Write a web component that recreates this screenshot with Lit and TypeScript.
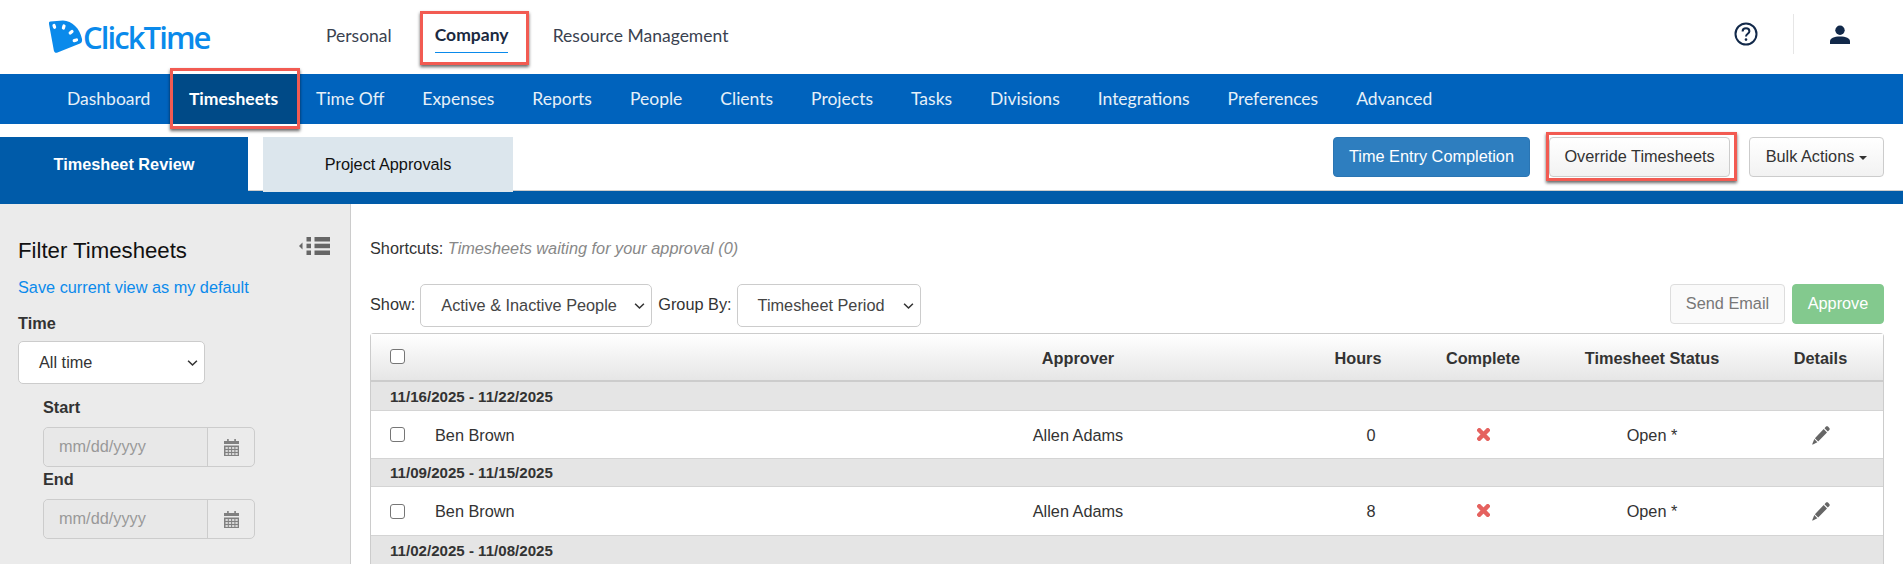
import { LitElement, html, css } from "lit";
import { customElement } from "lit/decorators.js";

const chevron = html`<svg class="chev" viewBox="0 0 12 8" width="11" height="8"><path d="M1.2 1.5 6 6.2l4.8-4.7" fill="none" stroke="#333" stroke-width="1.7"/></svg>`;
const calendar = html`<svg viewBox="0 0 15 17" width="15" height="17"><path fill="#8a8a8a" d="M3 0h1.800v2H3zM10.200 0H12v2h-1.800z"/><path fill="#808080" d="M0 2h15v3H0zM0 6.500h15V17H0z"/><g fill="#d8d8d8"><rect x="1.500" y="8" width="2.300" height="2"/><rect x="4.800" y="8" width="2.300" height="2"/><rect x="8.100" y="8" width="2.300" height="2"/><rect x="11.400" y="8" width="2.300" height="2"/><rect x="1.500" y="11" width="2.300" height="2"/><rect x="4.800" y="11" width="2.300" height="2"/><rect x="8.100" y="11" width="2.300" height="2"/><rect x="11.400" y="11" width="2.300" height="2"/><rect x="1.500" y="14" width="2.300" height="2"/><rect x="4.800" y="14" width="2.300" height="2"/><rect x="8.100" y="14" width="2.300" height="2"/><rect x="11.400" y="14" width="2.300" height="2"/></g></svg>`;
const pencil = html`<svg viewBox="0 0 18 19" width="18" height="19"><path fill="#666" d="M14 .6c.6-.6 1.400-.6 2 0l1.300 1.400c.6.6.6 1.400 0 2l-1.500 1.600-3.300-3.400zM11.700 3l3.300 3.400-8.800 9.200-3.300-3.400zM2.300 13l3.100 3.300L.9 18.600c-.4.2-.7-.1-.6-.5z"/></svg>`;
const cross = html`<svg class="x" viewBox="0 0 13 13" width="13" height="13"><path d="M2.300 2.300l8.400 8.400M10.700 2.300l-8.400 8.400" stroke="#e5625f" stroke-width="4.400" stroke-linecap="square"/></svg>`;

@customElement("app-root")
export class AppRoot extends LitElement {
  static styles = css`
    :host { display: block; width: 1903px; height: 564px; overflow: hidden; background: #fff; font-family: "Liberation Sans", Arial, sans-serif; font-size: 16.300px; color: #333; }
    * { box-sizing: border-box; }
    .top { height: 74px; display: flex; align-items: center; position: relative; }
    .logo { display: flex; align-items: center; margin-left: 49px; width: 277px; gap: 0; color: #0a8aeb; }
    .logo-text { font-family: "Open Sans", sans-serif; font-weight: 600; font-size: 31px; letter-spacing: -1.900px; line-height: 34px; }
    .top-nav { display: flex; font-family: Lato, sans-serif; font-size: 17.500px; color: #3a4250; align-items: center; }
    .top-nav .item { padding: 0 15px 6px; height: 54px; margin-top: 2px; display: flex; align-items: center; position: relative; }
    .top-nav .item:first-child { padding: 0 28px 6px 0; }
    .top-nav .item.on { width: 109px; padding: 0 15px 6px; font-weight: 700; color: #1b2a41; margin-right: 9px; }
    .top-nav .item.on span { border-bottom: 1px solid #0a8aeb; height: 33px; margin-top: 2px; line-height: 30px; display: block; }
    .top-right { margin-left: auto; display: flex; align-items: center; padding-right: 53px; }
    .help { display: block; margin-right: 35px; margin-top: -6px; }
    .vsep { width: 1px; height: 40px; background: #e6e6e6; margin-right: 36px; margin-top: -6px; }
    .user { display: block; margin-top: -4px; }
    .red::after { content: ""; position: absolute; border: 3px solid #f25b52; box-shadow: 0 2px 3px rgba(0,0,0,.6); pointer-events: none; }
    .top-nav .red::after { inset: 0; }
    .nav { height: 50px; background: #0063bd; display: flex; padding-left: 48px; font-family: Lato, sans-serif; font-size: 17.500px; color: #e6f0f8; }
    .nav .item { display: flex; align-items: center; padding: 0 19px 1px; position: relative; white-space: nowrap; }
    .nav .item.on { background: #004a87; font-weight: 700; color: #fff; padding: 0 19px 1px 16px; margin-left: 3.500px; }
    .nav .red::after { inset: -6px -3px -5px -3px; }
    .tabbar { height: 67px; display: flex; align-items: flex-start; padding: 13px 19px 0 0; border-bottom: 1px solid #ccc; }
    .tab { height: 54px; display: flex; align-items: center; justify-content: center; }
    .tab.a { width: 248px; background: #005ba9; color: #fff; font-weight: 700; }
    .tab.b { width: 250px; height: 55px; margin-left: 15px; background: #dce6ed; color: #111; position: relative; }
    .btns { margin-left: auto; display: flex; gap: 19px; }
    .btn { height: 40px; border-radius: 4px; display: flex; align-items: center; justify-content: center; border: 1px solid #ccc; background: linear-gradient(#fff, #f2f2f2); position: relative; white-space: nowrap; color: #333; padding-bottom: 1px; }
    .btn.primary { width: 197px; background: #2e7ebf; border-color: #2a75b3; color: #fff; }
    .btn.ov { width: 181px; }
    .btn.ov::after { inset: -6px -8px -5px -4px; }
    .btn.bulk { width: 135px; gap: 5px; }
    .caret { width: 0; height: 0; border-left: 4.500px solid transparent; border-right: 4.500px solid transparent; border-top: 4.500px solid #333; margin-top: 2px; }
    .bar { height: 13px; background: #005ba9; }
    .body { display: grid; grid-template-columns: 351px 1fr; height: 360px; }
    .side { background: #ebebeb; border-right: 1px solid #ccc; padding: 35px 20px 0 18px; }
    .side-head { display: flex; justify-content: space-between; align-items: flex-start; }
    .side-head svg { margin-top: -2px; }
    h2 { margin: 0; font-weight: 400; font-size: 22.200px; line-height: 24px; color: #111; }
    .link { color: #0a8aeb; line-height: 20px; margin-top: 14px; }
    .lbl { font-weight: 700; line-height: 20px; }
    .lbl.t { margin-top: 16px; }
    .sel { border: 1px solid #ccc; border-radius: 5px; background: #fff; display: flex; align-items: center; justify-content: space-between; height: 43px; }
    .sel.time { width: 187px; margin-top: 8px; padding: 0 6px 0 20px; }
    .sub { padding-left: 25px; }
    .sub .lbl.s { margin-top: 13px; }
    .sub .lbl.e { margin-top: 2px; }
    .date { width: 212px; height: 40px; border: 1px solid #ccc; border-radius: 5px; display: flex; margin-top: 10px; color: #999; }
    .date .v { width: 164px; padding: 0 0 1px 15px; display: flex; align-items: center; border-right: 1px solid #ccc; background: #e8e8e8; border-radius: 5px 0 0 5px; }
    .date .i { flex: 1; display: flex; align-items: center; justify-content: center; }
    .main { padding: 34px 19px 0 19px; min-width: 0; }
    .short { line-height: 20px; }
    .short i { color: #888; }
    .ctrl { display: flex; align-items: flex-start; margin-top: 26px; height: 49px; }
    .ctrl .l { line-height: 40px; margin-right: 5px; white-space: nowrap; }
    .ctrl .l + .sel { margin-right: 6px; padding: 0 6px 0 20px; color: #444; }
    .sel.show { width: 232px; }
    .sel.group { width: 184px; }
    .right { margin-left: auto; display: flex; gap: 7px; }
    .right .approve { width: 92px; background: #83c98e; color: #fff; border-color: #83c98e; }
    .right .send { width: 115px; color: #777; background: #fafafa; border-color: #ddd; }
    .table { border: 1px solid #ccc; border-bottom: 0; border-radius: 4px 4px 0 0; }
    .row { display: grid; grid-template-columns: 490px 434px 126px 124px 214px 123px; align-items: center; text-align: center; }
    .row > :first-child { text-align: left; display: flex; align-items: center; padding-left: 19px; }
    .head { height: 48px; background: linear-gradient(#fff, #e6e6e6); border-bottom: 2px solid #ccc; font-weight: 700; }
    .head > * { padding-top: 2px; }
    .head > :first-child { padding-bottom: 4px; }
    .grp { height: 29px; background: #e5e5e5; border-bottom: 1px solid #d4d4d4; padding-left: 19px; font-weight: 700; font-size: 15.100px; display: flex; align-items: center; color: #333; }
    .grp.b { height: 28px; }
    .item-row { height: 48px; border-bottom: 1px solid #d4d4d4; padding-top: 1px; }
    .item-row.b { height: 49px; }
    .cb { width: 15px; height: 15px; border: 1.500px solid #767676; border-radius: 3px; background: #fff; flex: none; }
    .item-row .cb { margin-top: -1px; }
    .name { margin-left: 30px; }
    .hrs { padding-left: 26px; }
    .ic { display: flex; justify-content: center; align-items: center; }
    .x { margin-top: -2px; }
  `;

  private rowItem(h: string, cls = "") {
    return html`<div class="row item-row ${cls}">
      <div><span class="cb"></span><span class="name">Ben Brown</span></div>
      <div>Allen Adams</div>
      <div class="hrs">${h}</div>
      <div class="ic">${cross}</div>
      <div>Open *</div>
      <div class="ic">${pencil}</div>
    </div>`;
  }

  render() {
    const navs = ["Dashboard", "Timesheets", "Time Off", "Expenses", "Reports", "People", "Clients", "Projects", "Tasks", "Divisions", "Integrations", "Preferences", "Advanced"];
    return html`
      <header class="top">
        <div class="logo">
          <svg viewBox="0 0 34 34" width="34" height="34">
            <path fill="#0a8aeb" d="M1.500 1.500 14 .5c9 .3 17 8 19 18.500.3 2-.3 3.800-2 4.500L8.500 32.500c-1.800.7-3.200-.1-3.600-1.800L0 4c-.3-1.500.2-2.300 1.500-2.500z"/>
            <g stroke="#fff" stroke-width="3.200" stroke-linecap="round"><path d="M5 5.500l.6 1.800M15 6l-.6 2M23 11.500l-1.800 1.500M27.500 20l-2.300.6"/></g>
          </svg>
          <span class="logo-text">ClickTime</span>
        </div>
        <nav class="top-nav">
          <div class="item">Personal</div>
          <div class="item on red"><span>Company</span></div>
          <div class="item">Resource Management</div>
        </nav>
        <div class="top-right">
          <svg class="help" viewBox="0 0 24 24" width="24" height="24"><circle cx="12" cy="12" r="10.500" fill="none" stroke="#12294a" stroke-width="2"/><path d="M8.600 9.400c0-2 1.500-3.200 3.400-3.200s3.400 1.200 3.400 3c0 2.600-3.400 2.600-3.400 5.300" fill="none" stroke="#12294a" stroke-width="2"/><circle cx="12" cy="17.600" r="1.300" fill="#12294a"/></svg>
          <div class="vsep"></div>
          <svg class="user" viewBox="0 0 20 20" width="20" height="20"><circle cx="10" cy="5.200" r="4.700" fill="#12294a"/><path fill="#12294a" d="M0 19v-2.500C0 13 4 11.500 10 11.500s10 1.500 10 5V19z"/></svg>
        </div>
      </header>
      <nav class="nav">
        ${navs.map((n) => html`<div class="item ${n === "Timesheets" ? "on red" : ""}">${n}</div>`)}
      </nav>
      <div class="tabbar">
        <div class="tab a">Timesheet Review</div>
        <div class="tab b">Project Approvals</div>
        <div class="btns">
          <div class="btn primary">Time Entry Completion</div>
          <div class="btn ov red">Override Timesheets</div>
          <div class="btn bulk">Bulk Actions <span class="caret"></span></div>
        </div>
      </div>
      <div class="bar"></div>
      <div class="body">
        <aside class="side">
          <div class="side-head">
            <h2>Filter Timesheets</h2>
            <svg viewBox="0 0 31 18" width="31" height="18" fill="#666"><path d="M0 9l3.500-3.500v7z"/><rect x="7.500" y="0" width="4.500" height="4.500"/><rect x="7.500" y="6.700" width="4.500" height="4.500"/><rect x="7.500" y="13.500" width="4.500" height="4.500"/><rect x="15.500" y="0" width="15.500" height="4.500"/><rect x="15.500" y="6.700" width="15.500" height="4.500"/><rect x="15.500" y="13.500" width="15.500" height="4.500"/></svg>
          </div>
          <div class="link">Save current view as my default</div>
          <div class="lbl t">Time</div>
          <div class="sel time"><span>All time</span>${chevron}</div>
          <div class="sub">
            <div class="lbl s">Start</div>
            <div class="date"><div class="v">mm/dd/yyyy</div><div class="i">${calendar}</div></div>
            <div class="lbl e">End</div>
            <div class="date"><div class="v">mm/dd/yyyy</div><div class="i">${calendar}</div></div>
          </div>
        </aside>
        <main class="main">
          <div class="short">Shortcuts: <i>Timesheets waiting for your approval (0)</i></div>
          <div class="ctrl">
            <span class="l">Show:</span>
            <div class="sel show"><span>Active &amp; Inactive People</span>${chevron}</div>
            <span class="l">Group By:</span>
            <div class="sel group"><span>Timesheet Period</span>${chevron}</div>
            <div class="right">
              <div class="btn send">Send Email</div>
              <div class="btn approve">Approve</div>
            </div>
          </div>
          <div class="table">
            <div class="row head">
              <div><span class="cb"></span></div><div>Approver</div><div>Hours</div><div>Complete</div><div>Timesheet Status</div><div>Details</div>
            </div>
            <div class="grp">11/16/2025 - 11/22/2025</div>
            ${this.rowItem("0")}
            <div class="grp b">11/09/2025 - 11/15/2025</div>
            ${this.rowItem("8", "b")}
            <div class="grp">11/02/2025 - 11/08/2025</div>
          </div>
        </main>
      </div>
    `;
  }
}
